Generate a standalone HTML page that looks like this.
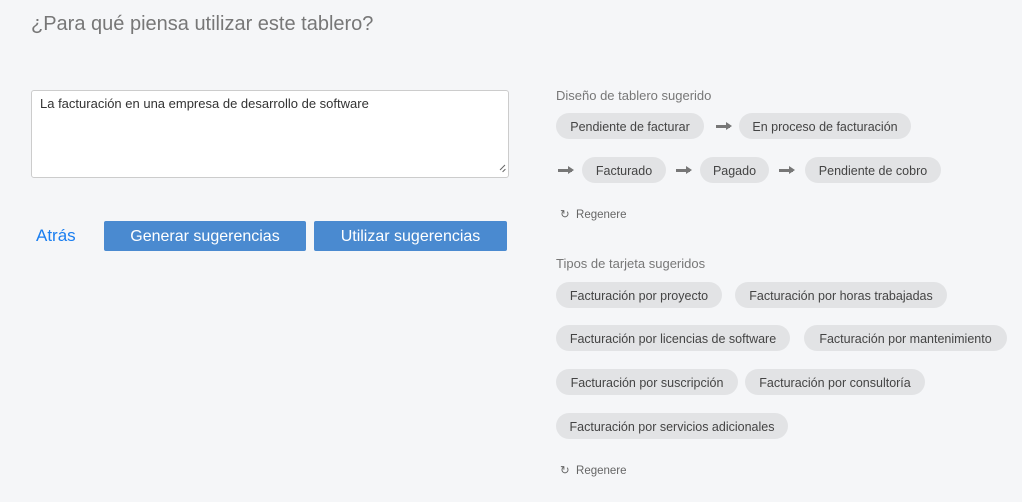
<!DOCTYPE html>
<html><head><meta charset="utf-8"><style>
body{margin:0;width:1022px;height:502px;background:#f5f6f8;font-family:"Liberation Sans",sans-serif;position:relative;overflow:hidden}
.a{position:absolute}
.c{position:absolute;height:26px;line-height:28px;border-radius:13px;background:#e2e3e5;color:#444;font-size:12.5px;text-align:center;white-space:nowrap}
.ar{position:absolute;width:14px;height:3px;background:#777}
.ar:after{content:"";position:absolute;right:-2px;top:-3px;border-left:6px solid #777;border-top:4.5px solid transparent;border-bottom:4.5px solid transparent}
.h{position:absolute;left:556px;font-size:13px;color:#777}
.r{position:absolute;left:560px;font-size:11.5px;color:#666}
.btn{position:absolute;top:221px;height:30px;line-height:31px;background:#4a8ad0;color:#fff;font-size:16px;text-align:center;border-radius:2px}
</style></head><body>
<div class="a" style="left:31px;top:13px;font-size:20px;color:#777">¿Para qué piensa utilizar este tablero?</div>
<div class="a" style="left:31px;top:90px;width:476px;height:86px;background:#fff;border:1px solid #ccc;border-radius:3px"></div>
<div class="a" style="left:40px;top:96px;font-size:13px;color:#333">La facturación en una empresa de desarrollo de software</div>
<div class="a" style="left:499px;top:167px;width:7px;height:1px;background:#666;transform:rotate(-45deg)"></div>
<div class="a" style="left:502px;top:170px;width:4px;height:1px;background:#666;transform:rotate(-45deg)"></div>
<div class="a" style="left:36px;top:226px;font-size:17px;color:#1a7ef0">Atrás</div>
<div class="btn" style="left:104px;width:202px">Generar sugerencias</div>
<div class="btn" style="left:314px;width:193px">Utilizar sugerencias</div>

<div class="h" style="top:88px">Diseño de tablero sugerido</div>
<div class="c" style="left:556px;top:113px;width:148px">Pendiente de facturar</div>
<div class="ar" style="left:716px;top:125px"></div>
<div class="c" style="left:739px;top:113px;width:172px">En proceso de facturación</div>
<div class="ar" style="left:558px;top:169px"></div>
<div class="c" style="left:582px;top:157px;width:84px">Facturado</div>
<div class="ar" style="left:676px;top:169px"></div>
<div class="c" style="left:700px;top:157px;width:69px">Pagado</div>
<div class="ar" style="left:779px;top:169px"></div>
<div class="c" style="left:805px;top:157px;width:136px">Pendiente de cobro</div>
<div class="r" style="top:207px">↻&nbsp; Regenere</div>

<div class="h" style="top:256px">Tipos de tarjeta sugeridos</div>
<div class="c" style="left:556px;top:282px;width:166px">Facturación por proyecto</div>
<div class="c" style="left:735px;top:282px;width:212px">Facturación por horas trabajadas</div>
<div class="c" style="left:556px;top:325px;width:234px">Facturación por licencias de software</div>
<div class="c" style="left:804px;top:325px;width:203px">Facturación por mantenimiento</div>
<div class="c" style="left:556px;top:369px;width:182px">Facturación por suscripción</div>
<div class="c" style="left:745px;top:369px;width:180px">Facturación por consultoría</div>
<div class="c" style="left:556px;top:413px;width:232px">Facturación por servicios adicionales</div>
<div class="r" style="top:463px">↻&nbsp; Regenere</div>
</body></html>
